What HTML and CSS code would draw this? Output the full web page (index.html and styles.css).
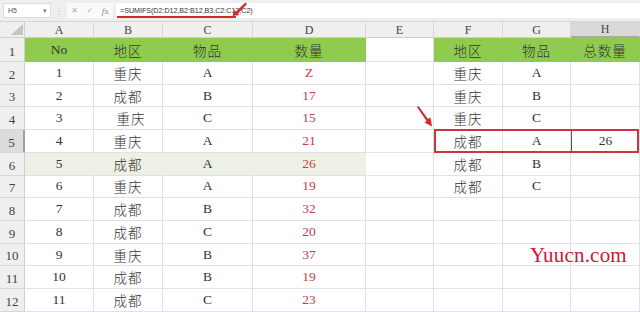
FILE: index.html
```html
<!DOCTYPE html>
<html>
<head>
<meta charset="utf-8">
<link rel="stylesheet" href="styles.css">
</head>
<body>
<div class="app">
  <div class="fbar">
    <div class="namebox"><span>H5</span><span class="dd">▾</span></div>
    <div class="grip">⋮</div>
    <div class="fbtns"><span>✕</span><span>✓</span><span class="fx"><i>f</i>x</span></div>
    <div class="finput"><span class="formula">=SUMIFS(D2:D12,B2:B12,B3,C2:C12,C2)</span></div>
  </div>
  <div class="sheet">
    <div class="corner"><svg width="12" height="11" viewBox="0 0 12 11"><polygon points="12,0 12,11 0,11" fill="#c4c4c4"/></svg></div>
    <div class="ch">A</div><div class="ch">B</div><div class="ch">C</div><div class="ch">D</div><div class="ch">E</div><div class="ch">F</div><div class="ch">G</div><div class="ch ch-act">H</div>

    <div class="rh">1</div>
    <div class="c g">No</div><div class="c g cj">地区</div><div class="c g cj">物品</div><div class="c g cj">数量</div><div class="c"></div><div class="c g cj">地区</div><div class="c g cj">物品</div><div class="c g cj">总数量</div>

    <div class="rh">2</div>
    <div class="c">1</div><div class="c cj">重庆</div><div class="c">A</div><div class="c red">Z</div><div class="c"></div><div class="c cj">重庆</div><div class="c">A</div><div class="c"></div>

    <div class="rh">3</div>
    <div class="c">2</div><div class="c cj">成都</div><div class="c">B</div><div class="c red">17</div><div class="c"></div><div class="c cj">重庆</div><div class="c">B</div><div class="c"></div>

    <div class="rh">4</div>
    <div class="c">3</div><div class="c cj shift">重庆</div><div class="c">C</div><div class="c red">15</div><div class="c"></div><div class="c cj">重庆</div><div class="c">C</div><div class="c"></div>

    <div class="rh rh-act">5</div>
    <div class="c">4</div><div class="c cj">重庆</div><div class="c">A</div><div class="c red">21</div><div class="c"></div><div class="c cj">成都</div><div class="c">A</div><div class="c act">26</div>

    <div class="rh">6</div>
    <div class="c hl">5</div><div class="c hl cj">成都</div><div class="c hl">A</div><div class="c hl red">26</div><div class="c"></div><div class="c cj">成都</div><div class="c">B</div><div class="c"></div>

    <div class="rh">7</div>
    <div class="c">6</div><div class="c cj">重庆</div><div class="c">A</div><div class="c red">19</div><div class="c"></div><div class="c cj">成都</div><div class="c">C</div><div class="c"></div>

    <div class="rh">8</div>
    <div class="c">7</div><div class="c cj">成都</div><div class="c">B</div><div class="c red">32</div><div class="c"></div><div class="c"></div><div class="c"></div><div class="c"></div>

    <div class="rh">9</div>
    <div class="c">8</div><div class="c cj">成都</div><div class="c">C</div><div class="c red">20</div><div class="c"></div><div class="c"></div><div class="c"></div><div class="c"></div>

    <div class="rh">10</div>
    <div class="c">9</div><div class="c cj">重庆</div><div class="c">B</div><div class="c red">37</div><div class="c"></div><div class="c"></div><div class="c"></div><div class="c"></div>

    <div class="rh">11</div>
    <div class="c">10</div><div class="c cj">成都</div><div class="c">B</div><div class="c red">19</div><div class="c"></div><div class="c"></div><div class="c"></div><div class="c"></div>

    <div class="rh">12</div>
    <div class="c">11</div><div class="c cj">成都</div><div class="c">C</div><div class="c red">23</div><div class="c"></div><div class="c"></div><div class="c"></div><div class="c"></div>
  </div>

  <div class="redbox"></div>
  <div class="uline"></div>
  <svg class="arrows" width="640" height="312" viewBox="0 0 640 312">
    <polygon points="245.5,2.5 247,4 238,13.5 239.5,15 232.5,16 234,10 236,11.5" fill="#d02a2a"/>
    <polygon points="417,107 418.5,106 428,119 430.5,117.5 432,126.5 424.5,122.5 426.5,121" fill="#d02a2a"/>
  </svg>
  <div class="wm">Yuucn.com</div>
</div>
</body>
</html>
```
FILE: styles.css
```css
* { box-sizing: border-box; }
html, body { margin: 0; padding: 0; }
body { width: 640px; height: 312px; overflow: hidden; background: #fff; font-family: "Liberation Serif", "Noto Sans CJK SC", serif; color: #333; }
.app { position: relative; width: 640px; height: 312px; overflow: hidden; }

.fbar { height: 22px; background: #eeeeee; display: flex; align-items: center; padding: 3px 0 3px 3px; gap: 3px; border-bottom: 1px solid #d6d6d6; }
.namebox { width: 48px; height: 15px; background: #fff; border: 1px solid #dcdcdc; display: flex; align-items: center; justify-content: space-between; padding: 0 3px 0 4px; font-family: "Liberation Sans", sans-serif; font-size: 7px; color: #555; }
.dd { font-size: 7px; color: #777; }
.grip { width: 10px; text-align: center; color: #bbb; font-size: 9px; font-family: "DejaVu Sans", sans-serif; }
.fbtns { width: 46px; height: 15px; background: #fafafa; display: flex; align-items: center; justify-content: space-around; color: #aaa; font-family: "DejaVu Sans", sans-serif; font-size: 8px; }
.fx { font-family: "Liberation Serif", serif; font-size: 9px; color: #888; }
.finput { flex: 1; height: 15px; background: #fff; display: flex; align-items: center; padding-left: 4px; }
.formula { font-family: "Liberation Sans", sans-serif; font-size: 7.2px; color: #333; letter-spacing: -0.05px; }

.sheet { display: grid; grid-template-columns: 25px 69px 69px 90px 113px 68px 69px 68px 69px; grid-template-rows: 16px 24px repeat(11, 22.73px); }
.corner { background: #efefef; border-right: 1px solid #d0d0d0; border-bottom: 1px solid #d0d0d0; display: flex; align-items: flex-end; justify-content: flex-end; padding: 0 1px 2px 0; }
.ch { background: #efefef; border-right: 1px solid #d8d8d8; border-bottom: 1px solid #cfcfcf; display: flex; align-items: center; justify-content: center; font-size: 12px; color: #444; padding-top: 1px; }
.ch-act { background: #d9d9d9; border-bottom: 2px solid #a9a9a9; }
.rh { background: #efefef; border-right: 1px solid #cfcfcf; border-bottom: 1px solid #d8d8d8; display: flex; align-items: flex-end; justify-content: center; font-size: 13px; color: #444; padding-bottom: 1px; }
.rh-act { background: #dcdcdc; border-right: 2px solid #9aa39a; }
.c { border-right: 1px solid #e0e0e6; border-bottom: 1px solid #e0e0e6; display: flex; align-items: center; justify-content: center; font-size: 13.5px; color: #333; }
.cj { font-family: "Noto Sans CJK SC", sans-serif; font-size: 13.5px; font-weight: 300; letter-spacing: 1px; }
.g { background: #8fcb4e; border-right-color: #8fcb4e; border-bottom-color: #8fcb4e; }
.red { color: #c43a48; }
.hl { background: #edf0e4; border-right-color: #edf0e4; }
.shift { padding-left: 6px; }
.act { border-left: 1px solid #555; }

.redbox { position: absolute; left: 434px; top: 129px; width: 205px; height: 24px; border: 2px solid #c8383b; }
.uline { position: absolute; left: 117px; top: 16px; width: 119px; height: 2px; background: #d02a2a; }
.arrows { position: absolute; left: 0; top: 0; pointer-events: none; }
.wm { position: absolute; left: 530px; top: 243px; font-family: "Liberation Serif", serif; font-size: 21px; color: #d2143a; letter-spacing: 0.2px; }
```
